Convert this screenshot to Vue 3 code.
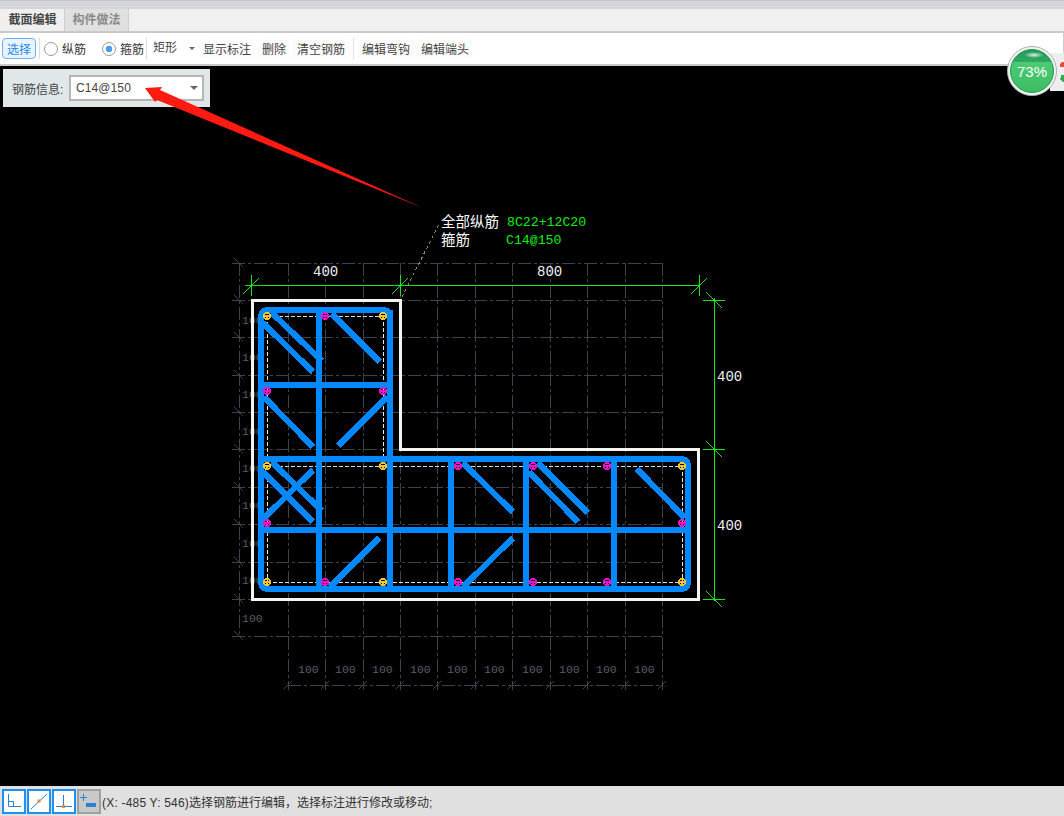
<script setup>
// 断面図のデータ（座標はページ基準）
const gridX = [288, 325, 363, 400, 437, 475, 512, 550, 587, 625, 662];
const gridY = [263, 300, 337, 375, 412, 449, 487, 524, 562, 599, 636];
const leftLabels = [320, 357, 394, 431, 468, 505, 543, 580, 618];
const bottomLabels = [308, 345, 382, 420, 457, 494, 532, 569, 606, 644];

const stirrup =
  "M269 310H382Q390 310 390 318V459H680Q688 459 688 467V581Q688 589 680 589H269Q261 589 261 581V318Q261 310 269 310Z";

const bars = [
  // 縦
  [319, 310, 319, 589], [390, 310, 390, 589], [451, 459, 451, 589], [526, 459, 526, 589], [614, 459, 614, 589],
  // 横
  [261, 385, 390, 385], [261, 459, 390, 459], [261, 530, 688, 530],
  // 斜め
  [272, 313, 322, 361], [263, 323, 313, 372], [332, 314, 380, 362], [264, 397, 313, 447], [387, 397, 338, 446],
  [272, 462, 322, 511], [263, 472, 313, 522], [313, 470, 263, 519], [379, 538, 330, 587],
  [463, 463, 513, 512], [538, 463, 588, 513], [529, 472, 578, 522], [637, 469, 685, 518], [513, 538, 463, 587],
];

const yellowPts = [[267, 316], [383, 316], [267, 466], [383, 466], [682, 466], [267, 582], [383, 582], [682, 582]];
const magentaPts = [[325, 316], [267, 391], [383, 391], [267, 523], [325, 582], [458, 466], [533, 466], [607, 466], [682, 523], [458, 582], [533, 582], [607, 582]];
</script>

<template>
  <div class="page">
    <div class="titlebar"></div>
    <div class="tabs">
      <div class="tab active">截面编辑</div>
      <div class="tab">构件做法</div>
    </div>
    <div class="toolbar">
      <button class="tool select">选择</button>
      <span class="sep first"></span>
      <label class="radio"><i class="dot"></i>纵筋</label>
      <label class="radio second"><i class="dot on"></i>箍筋</label>
      <span class="sep"></span>
      <div class="shape">矩形<i class="caret"></i></div>
      <button class="tool">显示标注</button>
      <button class="tool">删除</button>
      <button class="tool">清空钢筋</button>
      <span class="sep last"></span>
      <button class="tool">编辑弯钩</button>
      <button class="tool">编辑端头</button>
    </div>

    <div class="canvas">
      <div class="info">
        <span class="info-label">钢筋信息:</span>
        <div class="combo">C14@150<i class="caret"></i></div>
      </div>

      <svg class="drawing" width="1064" height="720" viewBox="0 66 1064 720">
        <!-- 補助グリッド -->
        <g class="grid">
          <line v-for="y in gridY" :key="'h' + y" x1="232" :y1="y" x2="662" :y2="y" />
          <line v-for="x in gridX" :key="'v' + x" :x1="x" y1="263" :x2="x" y2="690" />
          <line x1="239" y1="263" x2="239" y2="637" />
          <line x1="288" y1="685" x2="662" y2="685" />
        </g>
        <g class="ticks">
          <line v-for="y in gridY" :key="'lt' + y" x1="234" :y1="y - 5" x2="243" :y2="y + 4" />
          <line v-for="x in gridX" :key="'bt' + x" :x1="x - 4" y1="689" :x2="x + 4" y2="681" />
        </g>
        <g class="gridtext">
          <text v-for="y in leftLabels" :key="'ll' + y" x="242" :y="y + 4">100</text>
          <text v-for="x in bottomLabels" :key="'bl' + x" :x="x - 10" y="673">100</text>
        </g>

        <!-- 引出線 -->
        <line class="leader" x1="402" y1="297" x2="440" y2="222" />

        <!-- 寸法線 -->
        <g class="dim">
          <line x1="245" y1="285" x2="700" y2="285" />
          <line x1="243" y1="294" x2="259" y2="278" />
          <line x1="251" y1="275" x2="251" y2="296" />
          <line x1="392" y1="294" x2="408" y2="278" />
          <line x1="400" y1="275" x2="400" y2="296" />
          <line x1="691" y1="294" x2="707" y2="278" />
          <line x1="699" y1="275" x2="699" y2="296" />
          <line x1="714" y1="298" x2="714" y2="601" />
          <line x1="703" y1="300" x2="725" y2="300" />
          <line x1="706" y1="292" x2="722" y2="308" />
          <line x1="703" y1="449" x2="725" y2="449" />
          <line x1="706" y1="441" x2="722" y2="457" />
          <line x1="703" y1="599" x2="725" y2="599" />
          <line x1="706" y1="591" x2="722" y2="607" />
        </g>
        <g class="cadtext">
          <text x="313" y="276">400</text>
          <text x="537" y="276">800</text>
          <text x="717" y="381">400</text>
          <text x="717" y="530">400</text>
        </g>
        <g class="note">
          <text x="441" y="227">全部纵筋</text>
          <text x="441" y="245">箍筋</text>
          <text class="green" x="507" y="226">8C22+12C20</text>
          <text class="green" x="506" y="244">C14@150</text>
        </g>

        <!-- 断面外形 -->
        <path class="outline" d="M252 300H400V449.5H698V599H252Z" />

        <!-- 配筋 -->
        <path class="inner" d="M267 316V582M383 316V466M682 466V582" />
        <path class="inner light" d="M267 316H383M267 466H682M267 582H682" />
        <g class="rebar">
          <path :d="stirrup" />
          <line v-for="(b, i) in bars" :key="i" :x1="b[0]" :y1="b[1]" :x2="b[2]" :y2="b[3]" />
        </g>
        <g class="pt yellow">
          <g v-for="p in yellowPts" :key="p.join()">
            <circle :cx="p[0]" :cy="p[1]" r="3" />
            <path :d="`M${p[0] - 3} ${p[1]}h6M${p[0]} ${p[1]}v3`" />
          </g>
        </g>
        <g class="pt magenta">
          <g v-for="p in magentaPts" :key="p.join()">
            <circle :cx="p[0]" :cy="p[1]" r="3" />
            <path :d="`M${p[0] - 3} ${p[1]}h6M${p[0]} ${p[1]}v3`" />
          </g>
        </g>

        <!-- 赤い矢印 -->
        <polygon class="arrow" points="145,88 162,87 160,90 423,208 157,100 155,102" />
      </svg>
    </div>

    <div class="statusbar">
      <button class="snap">
        <svg width="20" height="20" viewBox="0 0 20 20">
          <path class="ic" d="M4.500 3V15.500H17M4.500 10.500H9.500V15.500" />
        </svg>
      </button>
      <button class="snap">
        <svg width="20" height="20" viewBox="0 0 20 20">
          <path class="ic" d="M2 18L18 3" />
          <rect class="ico" x="8.500" y="8.500" width="3" height="3" />
        </svg>
      </button>
      <button class="snap">
        <svg width="20" height="20" viewBox="0 0 20 20">
          <path class="ic" d="M2 15.500H18M9.500 4V15" />
          <rect class="ico" x="8" y="14" width="3" height="3" />
        </svg>
      </button>
      <button class="snap off">
        <svg width="20" height="20" viewBox="0 0 20 20">
          <path class="ic" d="M1 6.500H8M4.500 3V10" />
          <rect class="icb" x="7" y="12" width="10" height="4" />
        </svg>
      </button>
      <span class="status-text"><span class="coords">(X: -485 Y: 546)</span>选择钢筋进行编辑，选择标注进行修改或移动;</span>
    </div>

    <!-- 右上のフローティング表示 -->
    <div class="side">
      <svg width="14" height="38" viewBox="0 0 14 38">
        <path d="M10 11L12 9H14V14H10Z" fill="#f04a3a" />
        <path d="M11 22H14V29H13L10 26V25H11Z" fill="#2fa84f" />
      </svg>
    </div>
    <div class="ball">
      <svg width="50" height="50" viewBox="0 0 50 50">
        <defs>
          <linearGradient id="ballFill" x1="0" y1="0" x2="0" y2="1">
            <stop offset="0" stop-color="#25975a" />
            <stop offset="0.28" stop-color="#2fa862" />
            <stop offset="0.3" stop-color="#4ccb73" />
            <stop offset="1" stop-color="#3cbc63" />
          </linearGradient>
          <radialGradient id="ballShine" cx="0.5" cy="0.5" r="0.5">
            <stop offset="0" stop-color="#e4f7ea" stop-opacity="0.95" />
            <stop offset="1" stop-color="#e4f7ea" stop-opacity="0" />
          </radialGradient>
        </defs>
        <circle cx="25" cy="25" r="24.500" fill="#f2f4f3" stroke="#aab0ad" />
        <circle cx="25" cy="25" r="21.500" fill="url(#ballFill)" stroke="#1c9a50" />
        <ellipse cx="27" cy="9" rx="10" ry="3" fill="url(#ballShine)" />
        <text x="25" y="30.500" text-anchor="middle" class="ball-text">73%</text>
      </svg>
    </div>
  </div>
</template>

<style scoped>
.page {
  position: relative;
  width: 1064px;
  height: 816px;
  display: flex;
  flex-direction: column;
  overflow: hidden;
  font-family: "Liberation Sans", "Noto Sans CJK SC", sans-serif;
  font-size: 12px;
  color: #444;
}

/* 上部 */
.titlebar {
  height: 9px;
  flex: none;
  background: #d5d6db;
  border-top: 1px solid #c4c5ca;
  box-sizing: border-box;
}
.tabs {
  display: flex;
  flex: none;
  height: 22px;
  background: #f0f0f0;
  border-bottom: 2px solid #c9c9c9;
  padding-left: 1px;
}
.tab {
  width: 63px;
  line-height: 22px;
  text-align: center;
  font-weight: bold;
  color: #8a8a8a;
  background: #e0e0e0;
  border-right: 1px solid #d0d0d0;
}
.tab.active {
  color: #444;
  background: #efefef;
}
.toolbar {
  height: 33px;
  flex: none;
  display: flex;
  align-items: center;
  background: #fff;
  padding-left: 2px;
  border-bottom: 2px solid #c9c9c9;
  border-right: 1px solid #ccc;
  box-sizing: border-box;
}
.tool {
  height: 21px;
  padding: 0 4px;
  margin-right: 3px;
  border: none;
  border-radius: 3px;
  background: #fcfcfc;
  font: inherit;
  color: #444;
}
.tool.select {
  width: 34px;
  margin: 0;
  padding: 0;
  border: 1px solid #6db0f5;
  border-radius: 4px;
  background: #eaf4ff;
  color: #1e87f0;
}
.sep {
  width: 1px;
  height: 21px;
  margin: 0 3px 0 2px;
  background: #dcdcdc;
}
.sep.first {
  margin-left: 3px;
}
.sep.last {
  margin: 0 4px 0 1px;
}
.radio {
  display: flex;
  align-items: center;
  gap: 4px;
  margin-left: 1px;
  color: #333;
}
.radio.second {
  margin-left: 16px;
}
.dot {
  width: 14px;
  height: 14px;
  border: 1px solid #999;
  border-radius: 50%;
  box-sizing: border-box;
  background: #fff;
}
.dot.on {
  background: radial-gradient(circle, #4a9cf5 0 3px, #fff 3.6px);
}
.shape {
  position: relative;
  width: 48px;
  height: 21px;
  line-height: 21px;
  padding-left: 2px;
  margin-left: 1px;
  box-sizing: border-box;
  font-size: 12px;
}
.caret {
  position: absolute;
  border-left: 3px solid transparent;
  border-right: 3px solid transparent;
  border-top: 3px solid #666;
}
.shape .caret {
  right: 4px;
  top: 9px;
}

/* 作図エリア */
.canvas {
  position: relative;
  flex: 1;
  background: #000;
}
.drawing {
  position: absolute;
  left: 0;
  top: 0;
  display: block;
  shape-rendering: crispEdges;
}
.grid line {
  stroke: #3c424e;
  stroke-width: 1;
  stroke-dasharray: 13 3 3 3;
}
.ticks line {
  stroke: #3c424e;
  stroke-width: 1;
}
.gridtext text {
  fill: #5a5f68;
  font-family: "Liberation Mono", monospace;
  font-size: 11.5px;
}
.leader {
  stroke: #8a8a8a;
  stroke-dasharray: 3 3;
}
.dim line {
  stroke: #19e619;
  stroke-width: 1;
}
.cadtext text {
  fill: #f0f0f0;
  font-family: "Liberation Mono", monospace;
  font-size: 14px;
}
.note text {
  fill: #fff;
  font-family: "Liberation Mono", "Noto Sans CJK SC", monospace;
  font-size: 14.5px;
}
.note text.green {
  fill: #12f012;
  font-size: 13.2px;
}
.outline {
  fill: none;
  stroke: #f5f5f0;
  stroke-width: 3;
}
.inner {
  fill: none;
  stroke: #e8e8e8;
  stroke-dasharray: 4 2;
}
.inner.light {
  stroke: #c5dcf5;
}
.rebar path,
.rebar line {
  fill: none;
  stroke: #0588fc;
  stroke-width: 6;
}
.pt circle,
.pt path {
  fill: none;
  stroke-width: 1.5;
}
.pt.yellow circle,
.pt.yellow path {
  stroke: #f2c531;
}
.pt.magenta circle,
.pt.magenta path {
  stroke: #ee11cc;
}
.arrow {
  fill: #ff1a12;
  shape-rendering: auto;
}

/* 鉄筋情報パネル */
.info {
  position: absolute;
  left: 3px;
  top: 3px;
  width: 207px;
  height: 38px;
  display: flex;
  align-items: center;
  padding-left: 9px;
  gap: 6px;
  box-sizing: border-box;
  background: #e0e7e9;
}
.info-label {
  flex: none;
  white-space: nowrap;
  width: 51px;
}
.combo {
  position: relative;
  flex: none;
  width: 135px;
  height: 26px;
  line-height: 22px;
  padding-left: 5px;
  box-sizing: border-box;
  border: 2px solid #b5b5b5;
  background: #fff;
  letter-spacing: 0.1px;
}
.combo .caret {
  right: 4px;
  top: 9px;
  border-left-width: 4px;
  border-right-width: 4px;
  border-top-width: 4px;
}

/* ステータスバー */
.statusbar {
  flex: none;
  height: 30px;
  display: flex;
  align-items: center;
  padding-left: 2px;
  gap: 1px;
  box-sizing: border-box;
  background: #e0e0e0;
}
.snap {
  width: 24px;
  height: 25px;
  padding: 0;
  display: flex;
  align-items: center;
  justify-content: center;
  box-sizing: border-box;
  border: 2px solid #1e90f0;
  background: #fff;
}
.snap.off {
  border-color: #a0a0a0;
  background: #c8c8c8;
}
.ic {
  fill: none;
  stroke: #2a80d0;
  stroke-width: 1;
}
.ico {
  fill: #f08a30;
}
.icb {
  fill: #2a80d0;
}
.status-text {
  white-space: nowrap;
  color: #333;
}
.coords {
  letter-spacing: 0.2px;
}

/* フローティング */
.side {
  position: absolute;
  right: 0;
  top: 53px;
  width: 14px;
  height: 38px;
  background: #eeeeee;
}
.side svg {
  display: block;
}
.ball {
  position: absolute;
  left: 1007px;
  top: 46px;
  width: 50px;
  height: 50px;
}
.ball svg {
  display: block;
}
.ball-text {
  fill: #fff;
  font-family: "Liberation Sans", sans-serif;
  font-size: 15px;
}
</style>

<style>
html,
body {
  margin: 0;
  background: #000;
}
</style>
